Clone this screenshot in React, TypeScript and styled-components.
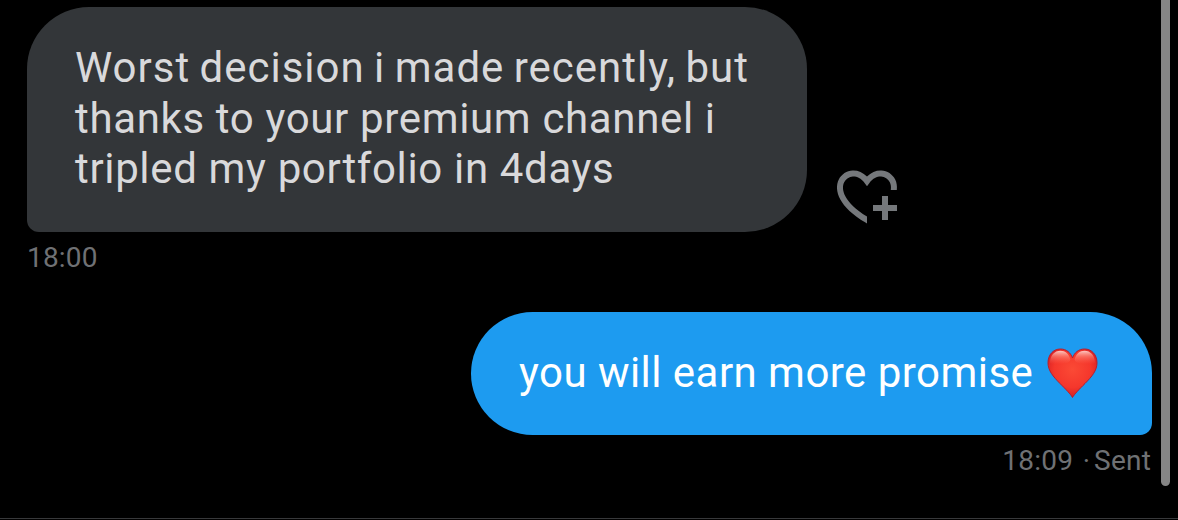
import styled, { createGlobalStyle } from "styled-components";


function HeartPlus() {
    return (
        <svg viewBox="0 0 24 24" fill="currentColor" aria-hidden="true">
            <path d="M17 12v3h-2.998v2h3v3h2v-3h3v-2h-3.001v-3H17zm-5 6.839c-3.871-2.34-6.053-4.639-7.127-6.609-1.112-2.04-1.031-3.7-.479-4.82.561-1.13 1.667-1.84 2.91-1.91 1.222-.06 2.68.51 3.892 2.16l.806 1.09.805-1.09c1.211-1.65 2.668-2.22 3.89-2.16 1.242.07 2.347.78 2.908 1.91.334.677.49 1.554.321 2.59h2.011c.153-1.283-.039-2.469-.539-3.48-.887-1.79-2.647-2.91-4.601-3.01-1.65-.09-3.367.56-4.796 2.01-1.43-1.45-3.147-2.1-4.798-2.01-1.954.1-3.714 1.22-4.601 3.01-.896 1.81-.846 4.17.514 6.67 1.353 2.48 4.003 5.12 8.382 7.67l.502.299v-2.32z" />
        </svg>
    );
}

function RedHeart() {
    return (
        <HeartEmoji viewBox="0 0 51 51" role="img" aria-label="red heart">
            <defs>
                <radialGradient id="heartFill" cx="0.5" cy="0.42" r="0.62">
                    <stop offset="0" stopColor="#fb4a35" />
                    <stop offset="0.6" stopColor="#f5372c" />
                    <stop offset="1" stopColor="#d01c22" />
                </radialGradient>
                <linearGradient id="heartShine" x1="0" y1="0" x2="0" y2="1">
                    <stop offset="0" stopColor="#ffd9d2" stopOpacity="0.9" />
                    <stop offset="0.45" stopColor="#ff9a8a" stopOpacity="0.5" />
                    <stop offset="1" stopColor="#ff6a5a" stopOpacity="0" />
                </linearGradient>
            </defs>
            <path
                d="M25.5 49.5C23.5 46 19 41.5 13 35.5C6 28.5 1 22.5 1 14.8C1 6.8 6.2 1 13.4 1C19.4 1 23.6 4.6 25.5 10C27.4 4.6 31.6 1 37.6 1C44.8 1 50 6.8 50 14.8C50 22.5 45 28.5 38 35.5C32 41.5 27.5 46 25.5 49.5Z"
                fill="url(#heartFill)"
                stroke="#b91d2b"
                strokeWidth="1" />
            <path d="M3 15C3 7.5 7.6 2.8 13.4 2.8C18.4 2.8 22 6 23.4 11.4C23 14.6 18 16 13 16C8 16 4 16.6 3 15Z" fill="url(#heartShine)" />
            <path d="M27.6 11.4C29 6 32.6 2.8 37.6 2.8C43.4 2.8 48 7.5 48 15C47 16.6 43 16 38 16C33 16 28 14.6 27.6 11.4Z" fill="url(#heartShine)" />
        </HeartEmoji>
    );
}

function App() {
    return (
        <Conversation>
            <GlobalStyle />
            <Thread>
                <Message>
                    <BubbleRow>
                        <Bubble>
                            <Line $spacing={0.99} $wordSpacing={-2}>Worst decision i made recently, but</Line>
                            <Line $spacing={0.65}>thanks to your premium channel i</Line>
                            <Line $spacing={0.65}>tripled my portfolio in 4days</Line>
                        </Bubble>
                        <ReactButton aria-label="Add reaction">
                            <HeartPlus />
                        </ReactButton>
                    </BubbleRow>
                    <Meta>18:00</Meta>
                </Message>
                <Message $sent>
                    <BubbleRow>
                        <Bubble $sent>
                            <Line $spacing={0.46}>you will earn more promise</Line>
                            <RedHeart />
                        </Bubble>
                    </BubbleRow>
                    <Meta>
                        <span>18:09</span>
                        <Dot>·</Dot>
                        <span>Sent</span>
                    </Meta>
                </Message>
            </Thread>
            <ScrollThumb />
        </Conversation>
    );
}

const GlobalStyle = createGlobalStyle`
body {
    margin: 0;
    background: #000;
    overflow: hidden;
}
`;

const Conversation = styled.main`
box-sizing: border-box;
display: flex;
height: 519px;
background: #000;
border-bottom: 1px solid #38393b;
font-family: Roboto, "Liberation Sans", sans-serif;
`;

const Thread = styled.div`
flex: 1;
display: flex;
flex-direction: column;
gap: 36px;
padding: 7px 9px 0px 27px;
`;

const Message = styled.div<{ $sent?: boolean }>`
display: flex;
flex-direction: column;
align-items: ${(p) => (p.$sent ? 'flex-end' : 'flex-start')};
`;

const BubbleRow = styled.div`
display: flex;
align-items: flex-end;
`;

const Bubble = styled.div<{ $sent?: boolean }>`
box-sizing: border-box;
display: flex;
flex-direction: ${(p) => (p.$sent ? 'row' : 'column')};
width: ${(p) => (p.$sent ? 681 : 780)}px;
height: ${(p) => (p.$sent ? 123 : 225)}px;
padding: 36px 48px;
border-radius: ${(p) => (p.$sent ? '62px 62px 12px 62px' : '62px 62px 62px 12px')};
background: ${(p) => (p.$sent ? '#1d9bf0' : '#333639')};
color: ${(p) => (p.$sent ? '#fff' : '#d9d9db')};
`;

const Line = styled.span<{ $spacing: number; $wordSpacing?: number }>`
font-size: 42px;
line-height: 50.5px;
letter-spacing: ${(p) => p.$spacing}px;
word-spacing: ${(p) => p.$wordSpacing ?? 0}px;
white-space: nowrap;
`;

const HeartEmoji = styled.svg`
width: 51px;
height: 51px;
margin-left: auto;
margin-right: 6px;
`;

const ReactButton = styled.button`
width: 72px;
height: 72px;
margin-left: 24px;
padding: 0px;
border: none;
background: none;
color: #75787b;
cursor: pointer;

    svg {
        display: block;
        width: 100%;
    }
`;

const Meta = styled.div`
display: flex;
margin-top: 7px;
padding-right: 1px;
height: 37px;
font-size: 28px;
line-height: 37px;
letter-spacing: 0.2px;
color: #6f7174;
`;

const Dot = styled.span`
box-sizing: border-box;
width: 21px;
text-align: center;
padding-left: 6px;
`;

const ScrollThumb = styled.div`
width: 9px;
height: 486px;
margin-right: 8px;
border-radius: 0px 0px 5px 5px;
background: #858585;
`;

export default App;
